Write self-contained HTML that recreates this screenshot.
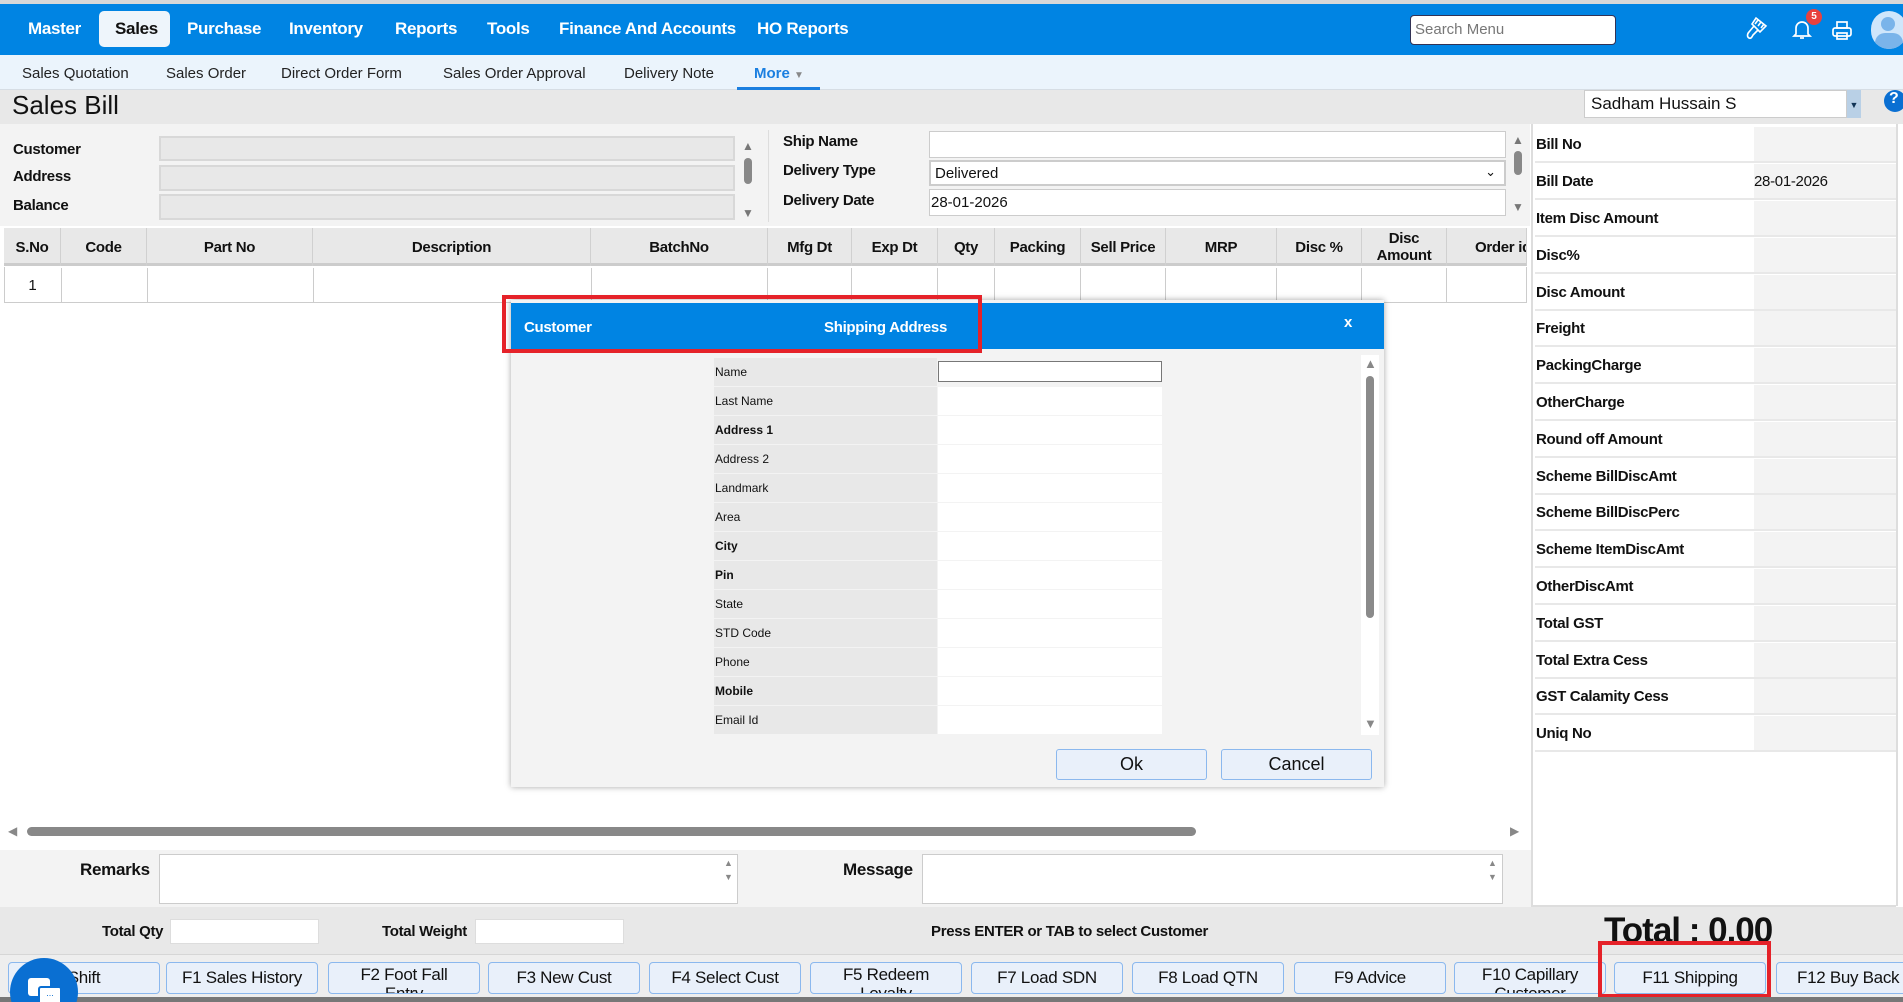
<!DOCTYPE html>
<html><head><meta charset="utf-8">
<style>
*{box-sizing:border-box;margin:0;padding:0}
html,body{width:1903px;height:1002px;overflow:hidden}
body{position:relative;background:#fff;font-family:"Liberation Sans",sans-serif;color:#111}
#root{position:absolute;left:0;top:0;width:1903px;height:1002px;overflow:hidden}
.a{position:absolute}
.nav{font-size:17px;font-weight:bold;color:#fff;top:19px;letter-spacing:-0.3px}
.sub{font-size:15px;color:#222;top:65px}
.lbl{font-size:15px;font-weight:bold;letter-spacing:-0.3px}
.th{position:absolute;top:228px;height:38px;border-right:1px solid #d0d0d0;font-size:15px;font-weight:bold;display:flex;align-items:center;justify-content:center;text-align:center;line-height:17px;letter-spacing:-0.3px}
.td{position:absolute;top:268px;height:35px;border-right:1px solid #ccc}
.rp{position:absolute;left:1535px;width:361px;height:36px;border-bottom:2px solid #e8e8e8;font-size:15px;font-weight:bold;letter-spacing:-0.3px;display:flex;align-items:center;padding-left:1px}
.rp .v{position:absolute;left:219px;top:0;width:142px;height:100%;background:#f3f3f3;font-weight:normal;display:flex;align-items:center}
.mr{position:absolute;left:714px;width:448px;height:29px;border-bottom:1px solid #f3f3f3;font-size:12px}
.mr .l{position:absolute;left:0;top:0;width:223px;height:28px;background:#e8e8e8;padding-left:1px;line-height:28px}
.mr .i{position:absolute;left:224px;top:0;width:224px;height:28px;background:#fff}
.fb{position:absolute;top:962px;width:152px;height:32px;background:#e9f0fa;border:1px solid #8bb8ee;border-radius:4px;font-size:17px;text-align:center;line-height:30px;overflow:hidden;letter-spacing:-0.3px}
.fb.w{line-height:19px;padding:2px 24px 0}
</style></head><body><div id="root">
<div class="a" style="left:0;top:0;width:1903px;height:4px;background:#d8d8d8"></div>
<div class="a" style="left:0;top:4px;width:1903px;height:51px;background:#0084e3"></div>
<div class="a" style="left:99px;top:11px;width:71px;height:36px;background:#eef5fb;border-radius:5px"></div>
<div class="a nav" style="left:28px">Master</div>
<div class="a nav" style="left:115px;color:#111">Sales</div>
<div class="a nav" style="left:187px">Purchase</div>
<div class="a nav" style="left:289px">Inventory</div>
<div class="a nav" style="left:395px">Reports</div>
<div class="a nav" style="left:487px">Tools</div>
<div class="a nav" style="left:559px">Finance And Accounts</div>
<div class="a nav" style="left:757px">HO Reports</div>
<div class="a" style="left:1410px;top:15px;width:206px;height:30px;background:#fff;border:1px solid #335;border-radius:4px;font-size:15px;color:#777;padding:5px 4px">Search Menu</div>
<svg class="a" style="left:1744px;top:14px" width="26" height="28" viewBox="0 0 26 28" fill="none" stroke="#fff" stroke-width="1.6"><path d="M12 4l10 8-6 6-8-8z"/><path d="M14 6l-3 4M17 8l-3 4M20 10l-3 4"/><path d="M10 12l-5 6c-2 2-2 5 0 6 2 1 3-1 4-3l5-5"/></svg>
<svg class="a" style="left:1790px;top:17px" width="24" height="24" viewBox="0 0 24 24" fill="none" stroke="#fff" stroke-width="1.7"><path d="M6 17V11a6 6 0 0 1 12 0v6l2 2H4z"/><path d="M10 21h4"/></svg>
<div class="a" style="left:1806px;top:9px;width:16px;height:16px;border-radius:8px;background:#e8413f;color:#fff;font-size:10px;font-weight:bold;text-align:center;line-height:16px">5</div>
<svg class="a" style="left:1831px;top:20px" width="22" height="22" viewBox="0 0 22 22" fill="none" stroke="#fff" stroke-width="1.7"><rect x="6" y="2" width="10" height="6"/><rect x="2" y="8" width="18" height="8" rx="2"/><rect x="6" y="13" width="10" height="6"/></svg>
<div class="a" style="left:1871px;top:11px;width:36px;height:38px;border-radius:18px;background:#cfe6fb;overflow:hidden"><div class="a" style="left:10px;top:6px;width:14px;height:14px;border-radius:7px;background:#7ab4ea"></div><div class="a" style="left:4px;top:22px;width:28px;height:20px;border-radius:14px;background:#7ab4ea"></div></div>

<div class="a" style="left:0;top:55px;width:1903px;height:35px;background:#ebf4fc;border-bottom:1px solid #d6dde4"></div>
<div class="a sub" style="left:22px">Sales Quotation</div>
<div class="a sub" style="left:166px">Sales Order</div>
<div class="a sub" style="left:281px">Direct Order Form</div>
<div class="a sub" style="left:443px">Sales Order Approval</div>
<div class="a sub" style="left:624px">Delivery Note</div>
<div class="a sub" style="left:754px;color:#1b7fe0;font-weight:bold">More <span style="font-size:10px;color:#888">▼</span></div>
<div class="a" style="left:737px;top:87px;width:83px;height:3px;background:#1b7fe0"></div>

<div class="a" style="left:0;top:90px;width:1903px;height:34px;background:#e8e8e8"></div>
<div class="a" style="left:12px;top:90px;font-size:26px">Sales Bill</div>
<div class="a" style="left:1584px;top:90px;width:263px;height:28px;background:#fff;border:1px solid #ccc;font-size:17px;padding:3px 6px">Sadham Hussain S</div>
<div class="a" style="left:1847px;top:90px;width:14px;height:28px;background:#b9d0e6;font-size:9px;color:#135;text-align:center;line-height:30px">▼</div>
<div class="a" style="left:1884px;top:90px;width:22px;height:22px;border-radius:11px;background:#0a6fd2;color:#fff;font-weight:bold;font-size:16px;padding-left:5px">?</div>

<div class="a" style="left:0;top:124px;width:1530px;height:102px;background:#f3f3f3"></div>
<div class="a lbl" style="left:13px;top:141px">Customer</div>
<div class="a lbl" style="left:13px;top:168px">Address</div>
<div class="a lbl" style="left:13px;top:197px">Balance</div>
<div class="a" style="left:159px;top:136px;width:576px;height:25px;background:#e8e8e8;border:2px solid #d8d8d8"></div>
<div class="a" style="left:159px;top:165px;width:576px;height:26px;background:#e8e8e8;border:2px solid #d8d8d8"></div>
<div class="a" style="left:159px;top:194px;width:576px;height:26px;background:#e8e8e8;border:2px solid #d8d8d8"></div>
<div class="a" style="left:742px;top:139px;font-size:12px;color:#777">▲</div>
<div class="a" style="left:744px;top:158px;width:8px;height:26px;border-radius:4px;background:#888"></div>
<div class="a" style="left:742px;top:206px;font-size:12px;color:#777">▼</div>
<div class="a" style="left:768px;top:130px;width:1px;height:92px;background:#ddd"></div>
<div class="a lbl" style="left:783px;top:133px">Ship Name</div>
<div class="a lbl" style="left:783px;top:162px">Delivery Type</div>
<div class="a lbl" style="left:783px;top:192px">Delivery Date</div>
<div class="a" style="left:929px;top:131px;width:577px;height:27px;background:#fff;border:1px solid #ccc"></div>
<div class="a" style="left:929px;top:160px;width:577px;height:26px;background:#fff;border:2px solid #ccc;font-size:15px;padding:3px 4px">Delivered<span style="position:absolute;right:8px;top:2px;font-size:13px">⌄</span></div>
<div class="a" style="left:929px;top:189px;width:577px;height:27px;background:#fff;border:1px solid #ccc;font-size:15px;padding:4px 1px">28-01-2026</div>
<div class="a" style="left:1512px;top:133px;font-size:12px;color:#777">▲</div>
<div class="a" style="left:1514px;top:151px;width:8px;height:24px;border-radius:4px;background:#888"></div>
<div class="a" style="left:1512px;top:200px;font-size:12px;color:#777">▼</div>

<div class="a" style="left:4px;top:228px;width:1523px;height:38px;background:#e8e8e8;border-bottom:3px solid #ccc"></div>
<div class="th" style="left:4px;width:57px">S.No</div>
<div class="th" style="left:61px;width:86px">Code</div>
<div class="th" style="left:147px;width:166px">Part No</div>
<div class="th" style="left:313px;width:278px">Description</div>
<div class="th" style="left:591px;width:177px">BatchNo</div>
<div class="th" style="left:768px;width:84px">Mfg Dt</div>
<div class="th" style="left:852px;width:86px">Exp Dt</div>
<div class="th" style="left:938px;width:57px">Qty</div>
<div class="th" style="left:995px;width:86px">Packing</div>
<div class="th" style="left:1081px;width:85px">Sell Price</div>
<div class="th" style="left:1166px;width:111px">MRP</div>
<div class="th" style="left:1277px;width:85px">Disc %</div>
<div class="th" style="left:1362px;width:85px">Disc<br>Amount</div>
<div class="th" style="left:1447px;width:80px;justify-content:flex-start;padding-left:28px;overflow:hidden;white-space:nowrap">Order id</div>
<div class="a" style="left:4px;top:267px;width:1523px;height:36px;border:1px solid #ccc;border-top:none"></div>
<div class="td" style="left:4px;width:58px;font-size:15px;text-align:center;line-height:35px">1</div>
<div class="td" style="left:62px;width:86px"></div>
<div class="td" style="left:148px;width:166px"></div>
<div class="td" style="left:314px;width:278px"></div>
<div class="td" style="left:592px;width:176px"></div>
<div class="td" style="left:768px;width:84px"></div>
<div class="td" style="left:852px;width:86px"></div>
<div class="td" style="left:938px;width:57px"></div>
<div class="td" style="left:995px;width:86px"></div>
<div class="td" style="left:1081px;width:85px"></div>
<div class="td" style="left:1166px;width:111px"></div>
<div class="td" style="left:1277px;width:85px"></div>
<div class="td" style="left:1362px;width:85px"></div>

<div class="a" style="left:1531px;top:124px;width:2px;height:782px;background:#ddd"></div>
<div class="a" style="left:1896px;top:124px;width:2px;height:782px;background:#ddd"></div>
<div class="rp" style="top:127px">Bill No<div class="v"></div></div>
<div class="rp" style="top:164px">Bill Date<div class="v">28-01-2026</div></div>
<div class="rp" style="top:201px">Item Disc Amount<div class="v"></div></div>
<div class="rp" style="top:238px">Disc%<div class="v"></div></div>
<div class="rp" style="top:275px">Disc Amount<div class="v"></div></div>
<div class="rp" style="top:311px">Freight<div class="v"></div></div>
<div class="rp" style="top:348px">PackingCharge<div class="v"></div></div>
<div class="rp" style="top:385px">OtherCharge<div class="v"></div></div>
<div class="rp" style="top:422px">Round off Amount<div class="v"></div></div>
<div class="rp" style="top:459px">Scheme BillDiscAmt<div class="v"></div></div>
<div class="rp" style="top:495px">Scheme BillDiscPerc<div class="v"></div></div>
<div class="rp" style="top:532px">Scheme ItemDiscAmt<div class="v"></div></div>
<div class="rp" style="top:569px">OtherDiscAmt<div class="v"></div></div>
<div class="rp" style="top:606px">Total GST<div class="v"></div></div>
<div class="rp" style="top:643px">Total Extra Cess<div class="v"></div></div>
<div class="rp" style="top:679px">GST Calamity Cess<div class="v"></div></div>
<div class="rp" style="top:716px">Uniq No<div class="v"></div></div>

<!-- modal -->
<div class="a" style="left:511px;top:300px;width:873px;height:487px;background:#f3f3f3;box-shadow:0 0 6px rgba(0,0,0,.35)"></div>
<div class="a" style="left:511px;top:303px;width:873px;height:46px;background:#0084e3"></div>
<div class="a" style="left:502px;top:295px;width:480px;height:58px;border:4px solid #e52229"></div>
<div class="a" style="left:524px;top:319px;color:#fff;font-weight:bold;font-size:15px;letter-spacing:-0.3px">Customer</div>
<div class="a" style="left:824px;top:319px;color:#fff;font-weight:bold;font-size:15px;letter-spacing:-0.3px">Shipping Address</div>
<div class="a" style="left:1344px;top:314px;color:#fff;font-weight:bold;font-size:15px">x</div>
<div class="mr" style="top:358px"><div class="l">Name</div><div class="i" style="border:1px solid #777;top:3px;height:21px"></div></div>
<div class="mr" style="top:387px"><div class="l">Last Name</div><div class="i"></div></div>
<div class="mr" style="top:416px"><div class="l" style="font-weight:bold">Address 1</div><div class="i"></div></div>
<div class="mr" style="top:445px"><div class="l">Address 2</div><div class="i"></div></div>
<div class="mr" style="top:474px"><div class="l">Landmark</div><div class="i"></div></div>
<div class="mr" style="top:503px"><div class="l">Area</div><div class="i"></div></div>
<div class="mr" style="top:532px"><div class="l" style="font-weight:bold">City</div><div class="i"></div></div>
<div class="mr" style="top:561px"><div class="l" style="font-weight:bold">Pin</div><div class="i"></div></div>
<div class="mr" style="top:590px"><div class="l">State</div><div class="i"></div></div>
<div class="mr" style="top:619px"><div class="l">STD Code</div><div class="i"></div></div>
<div class="mr" style="top:648px"><div class="l">Phone</div><div class="i"></div></div>
<div class="mr" style="top:677px"><div class="l" style="font-weight:bold">Mobile</div><div class="i"></div></div>
<div class="mr" style="top:706px"><div class="l">Email Id</div><div class="i"></div></div>
<div class="a" style="left:1361px;top:355px;width:18px;height:380px;background:#fff"></div>
<div class="a" style="left:1364px;top:356px;font-size:13px;color:#888">▲</div>
<div class="a" style="left:1366px;top:376px;width:8px;height:242px;border-radius:4px;background:#8a8a8a"></div>
<div class="a" style="left:1364px;top:716px;font-size:13px;color:#888">▼</div>
<div class="a" style="left:1056px;top:749px;width:151px;height:31px;background:#e9f0fa;border:1px solid #8bb8ee;border-radius:3px;font-size:18px;text-align:center;line-height:29px">Ok</div>
<div class="a" style="left:1221px;top:749px;width:151px;height:31px;background:#e9f0fa;border:1px solid #8bb8ee;border-radius:3px;font-size:18px;text-align:center;line-height:29px">Cancel</div>

<!-- h scroll -->
<div class="a" style="left:8px;top:824px;font-size:12px;color:#888">◀</div>
<div class="a" style="left:27px;top:827px;width:1169px;height:9px;border-radius:5px;background:#888"></div>
<div class="a" style="left:1510px;top:824px;font-size:12px;color:#888">▶</div>

<div class="a" style="left:0;top:850px;width:1531px;height:57px;background:#f3f3f3"></div>
<div class="a lbl" style="left:80px;top:860px;font-size:17px">Remarks</div>
<div class="a" style="left:159px;top:854px;width:579px;height:50px;background:#fff;border:1px solid #ccc"></div>
<div class="a" style="left:724px;top:856px;font-size:9px;color:#888;line-height:14px">▲<br>▼</div>
<div class="a lbl" style="left:843px;top:860px;font-size:17px">Message</div>
<div class="a" style="left:922px;top:854px;width:581px;height:50px;background:#fff;border:1px solid #ccc"></div>
<div class="a" style="left:1488px;top:856px;font-size:9px;color:#888;line-height:14px">▲<br>▼</div>

<div class="a" style="left:0;top:907px;width:1903px;height:48px;background:#e8e8e8;border-bottom:1px solid #d6d6d6"></div>
<div class="a" style="left:1531px;top:905px;width:365px;height:2px;background:#ddd"></div>
<div class="a lbl" style="left:102px;top:923px">Total Qty</div>
<div class="a" style="left:170px;top:919px;width:149px;height:25px;background:#fff;border:1px solid #ddd"></div>
<div class="a lbl" style="left:382px;top:923px">Total Weight</div>
<div class="a" style="left:475px;top:919px;width:149px;height:25px;background:#fff;border:1px solid #ddd"></div>
<div class="a lbl" style="left:931px;top:923px">Press ENTER or TAB to select Customer</div>
<div class="a" style="left:1604px;top:911px;font-size:35px;font-weight:bold;letter-spacing:-1px">Total : 0.00</div>

<div class="a" style="left:0;top:955px;width:1903px;height:47px;background:#eeeeee"></div>
<div class="fb" style="left:8px">Shift</div>
<div class="fb" style="left:166px">F1 Sales History</div>
<div class="fb w" style="left:328px">F2 Foot Fall Entry</div>
<div class="fb" style="left:488px">F3 New Cust</div>
<div class="fb" style="left:649px">F4 Select Cust</div>
<div class="fb w" style="left:810px">F5 Redeem Loyalty</div>
<div class="fb" style="left:971px">F7 Load SDN</div>
<div class="fb" style="left:1132px">F8 Load QTN</div>
<div class="fb" style="left:1294px">F9 Advice</div>
<div class="fb w" style="left:1454px;padding:2px 14px 0">F10 Capillary Customer</div>
<div class="fb" style="left:1614px">F11 Shipping</div>
<div class="fb" style="left:1776px;width:140px;text-align:left;padding-left:20px;white-space:nowrap">F12 Buy Back</div>
<div class="a" style="left:1598px;top:941px;width:173px;height:57px;border:4px solid #e52229"></div>
<div class="a" style="left:0;top:997px;width:1903px;height:5px;background:#777"></div>
<div class="a" style="left:10px;top:958px;width:68px;height:68px;border-radius:34px;background:#0a6fd2"></div>
<div class="a" style="left:28px;top:978px;width:22px;height:18px;border-radius:3px;background:#fff"></div>
<div class="a" style="left:38px;top:986px;width:24px;height:20px;border-radius:3px;background:#fff;border:2px solid #0a6fd2;font-size:9px;color:#0a6fd2;text-align:center;line-height:10px">...</div>
</div></body></html>
